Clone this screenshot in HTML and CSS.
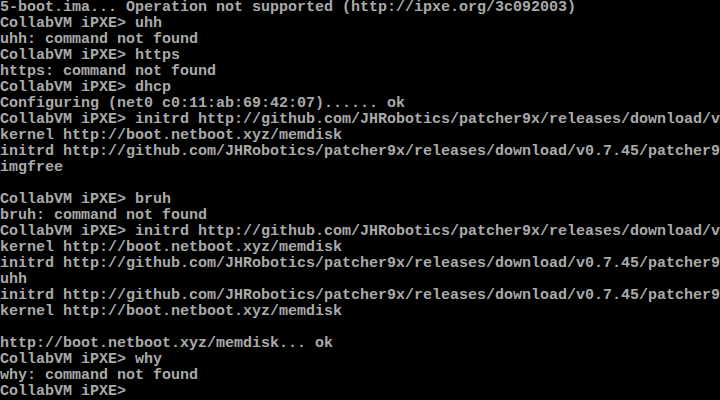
FILE: index.html
```html
<!DOCTYPE html>
<html>
<head>
<meta charset="utf-8">
<link rel="stylesheet" href="styles.css">
</head>
<body>
<pre class="console">5-boot.ima... Operation not supported (http://ipxe.org/3c092003)
CollabVM iPXE&gt; uhh
uhh: command not found
CollabVM iPXE&gt; https
https: command not found
CollabVM iPXE&gt; dhcp
Configuring (net0 c0:11:ab:69:42:07)...... ok
CollabVM iPXE&gt; initrd http://github.com/JHRobotics/patcher9x/releases/download/v
kernel http://boot.netboot.xyz/memdisk
initrd http://github.com/JHRobotics/patcher9x/releases/download/v0.7.45/patcher9
imgfree

CollabVM iPXE&gt; bruh
bruh: command not found
CollabVM iPXE&gt; initrd http://github.com/JHRobotics/patcher9x/releases/download/v
kernel http://boot.netboot.xyz/memdisk
initrd http://github.com/JHRobotics/patcher9x/releases/download/v0.7.45/patcher9
uhh
initrd http://github.com/JHRobotics/patcher9x/releases/download/v0.7.45/patcher9
kernel http://boot.netboot.xyz/memdisk

http://boot.netboot.xyz/memdisk... ok
CollabVM iPXE&gt; why
why: command not found
CollabVM iPXE&gt; </pre>
</body>
</html>
```
FILE: styles.css
```css
html, body {
  margin: 0;
  padding: 0;
  background: #000;
  width: 720px;
  height: 400px;
  overflow: hidden;
}
.console {
  margin: 0;
  padding: 0;
  color: #aaaaaa;
  font-family: "Liberation Mono", "DejaVu Sans Mono", monospace;
  font-size: 15px;
  line-height: 16px;
  font-weight: bold;
  white-space: pre;
}
```
